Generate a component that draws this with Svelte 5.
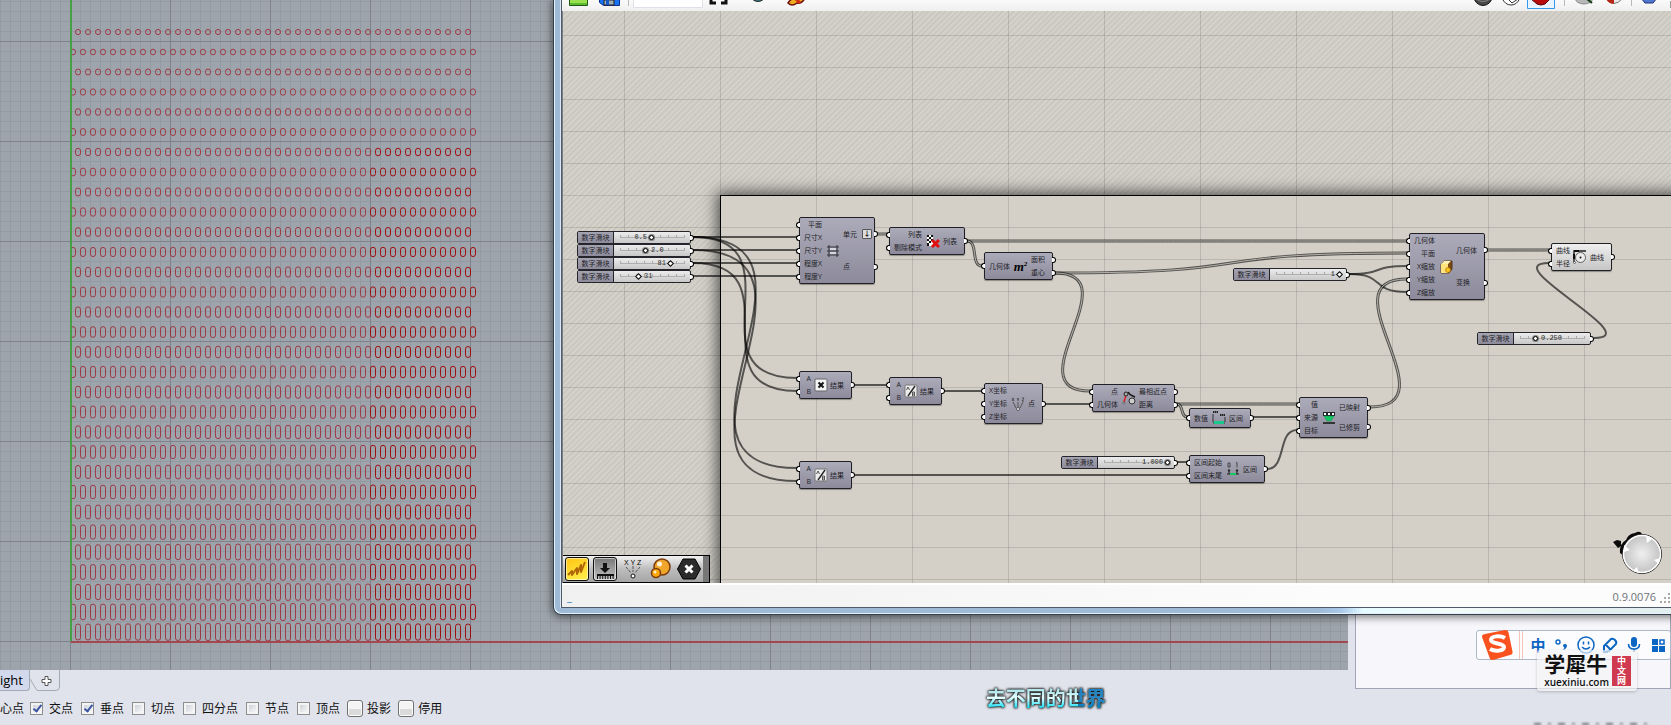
<script>
	// Canvas pan: node coordinates are stored in document space.
	const pan = { x: -563, y: -11 };

	let sliders = [
		{ id: 's1', x: 577, y: 231, value: 50, text: '0.5', side: 'left', knob: 'round' },
		{ id: 's2', x: 577, y: 244, value: 40, text: '2.0', side: 'right', knob: 'round' },
		{ id: 's3', x: 577, y: 257, value: 80, text: '81', side: 'left', knob: 'diamond' },
		{ id: 's4', x: 577, y: 270, value: 30, text: '31', side: 'right', knob: 'diamond' },
		{ id: 's5', x: 1477, y: 332, value: 25, text: '0.250', side: 'right', knob: 'round' },
		{ id: 's6', x: 1233, y: 268, value: 100, text: '1', side: 'left', knob: 'diamond' },
		{ id: 's7', x: 1061, y: 456, value: 100, text: '1.000', side: 'left', knob: 'round' }
	];

	const nodes = [
		{ id: 'hex', x: 799, y: 217, w: 76, icon: 'hex', ins: ['平面', '尺寸X', '尺寸Y', '程度X', '程度Y'], outs: ['单元', '点'], graft: 0 },
		{ id: 'cull', x: 889, y: 227, w: 76, icon: 'cull', ins: ['列表', '剔除模式'], outs: ['列表'] },
		{ id: 'area', x: 984, y: 252, w: 69, icon: 'area', ins: ['几何体'], outs: ['面积', '重心'] },
		{ id: 'mul', x: 799, y: 371, w: 53, icon: 'mul', ins: ['A', 'B'], outs: ['结果'] },
		{ id: 'div1', x: 889, y: 377, w: 53, icon: 'div', ins: ['A', 'B'], outs: ['结果'] },
		{ id: 'pt', x: 984, y: 383, w: 59, icon: 'xyz', ins: ['X坐标', 'Y坐标', 'Z坐标'], outs: ['点'] },
		{ id: 'div2', x: 799, y: 461, w: 53, icon: 'div', ins: ['A', 'B'], outs: ['结果'] },
		{ id: 'pull', x: 1092, y: 384, w: 83, icon: 'pull', ins: ['点', '几何体'], outs: ['最相近点', '距离'] },
		{ id: 'bnd', x: 1189, y: 408, w: 62, icon: 'bounds', ins: ['数值'], outs: ['区间'], slim: true },
		{ id: 'remap', x: 1299, y: 397, w: 69, icon: 'remap', ins: ['值', '来源', '目标'], outs: ['已映射', '已修剪'] },
		{ id: 'dom', x: 1189, y: 455, w: 76, icon: 'domain', ins: ['区间起始', '区间末尾'], outs: ['区间'] },
		{ id: 'scale', x: 1409, y: 233, w: 76, icon: 'scale', ins: ['几何体', '平面', 'X缩放', 'Y缩放', 'Z缩放'], outs: ['几何体', '变换'] },
		{ id: 'fillet', x: 1551, y: 243, w: 61, icon: 'fillet', ins: ['曲线', '半径'], outs: ['曲线'], light: true }
	];

	// x1, y1, x2, y2, double (list data)
	const wires = [
		[693, 237, 797, 237],
		[693, 250, 797, 250],
		[693, 263, 797, 263],
		[693, 276, 797, 276],
		[693, 237, 797, 378],
		[693, 263, 797, 391],
		[693, 237, 797, 468],
		[693, 250, 797, 481],
		[877, 234, 887, 234, true],
		[967, 241, 1407, 241, true],
		[967, 241, 982, 266, true],
		[1055, 273, 1407, 253, true],
		[1055, 273, 1090, 391, true],
		[1349, 274, 1407, 266],
		[1349, 274, 1407, 292],
		[1370, 407, 1407, 279, true],
		[854, 385, 887, 385],
		[944, 391, 982, 391],
		[1045, 404, 1090, 404],
		[1177, 404, 1297, 404, true],
		[1177, 404, 1187, 417, true],
		[1253, 417, 1297, 417],
		[1267, 469, 1297, 430],
		[1177, 462, 1187, 462],
		[854, 475, 1187, 475],
		[1487, 250, 1549, 250, true],
		[1594, 338, 1549, 263]
	];

	function wirePath([x1, y1, x2, y2]) {
		const dist = Math.hypot(x2 - x1, y2 - y1);
		const d = dist * (dist < 50 ? 0.4 : 0.63);
		return `M${x1} ${y1}C${x1 + d} ${y1} ${x2 - d} ${y2} ${x2} ${y2}`;
	}

	// 31 staggered rows of stretched cells, longer towards the bottom centre.
	const cells = [];
	for (let row = 0; row < 31; row++) {
		const odd = row % 2;
		const count = odd ? 41 : 40;
		for (let col = 0; col < count; col++) {
			const cx = (odd ? 73 : 78) + col * 10;
			const cy = 32 + row * 20;
			const bulge = Math.max(0, 1 - Math.abs(cx - 270) / 190) * (row / 30);
			cells.push({ cx, cy, ry: 2.6 + row * 0.18 + bulge, dark: cx > 370 && row > 5 });
		}
	}

	const knobAt = (v) => Math.round(6 + v * 0.64);

	const snaps = [
		{ label: '交点', on: true },
		{ label: '垂点', on: true },
		{ label: '切点', on: false },
		{ label: '四分点', on: false },
		{ label: '节点', on: false },
		{ label: '顶点', on: false }
	];
	const modes = ['投影', '停用'];
</script>

{#snippet glyph(name)}
	<svg class="glyph" viewBox="0 0 14 14" aria-hidden="true">
		{#if name === 'hex'}
			<path d="M3 1v12M11 1v12M1 3h12M1 7h12M1 11h12" stroke="#33333b" stroke-width="1" />
			<path d="M4 4h6v2H4zM4 8h6v2H4z" fill="#d5d5dc" />
		{:else if name === 'cull'}
			<path d="M1 1h6v11H1z" fill="#fff" />
			<path d="M1 1h2v2H1zM5 1h2v2H5zM3 3h2v2H3zM1 5h2v2H1zM5 5h2v2H5zM3 7h2v2H3zM1 9h2v3H1z" fill="#111" />
			<path d="M6 6l7 7M13 6l-7 7" stroke="#e01010" stroke-width="3" />
		{:else if name === 'mul'}
			<rect x="1" y="1" width="12" height="12" rx="1" fill="#f4f4f4" stroke="#666" />
			<path d="M4.500 4.500l5 5M9.500 4.500l-5 5" stroke="#111" stroke-width="2" />
		{:else if name === 'div'}
			<rect x="1" y="1" width="12" height="12" rx="1" fill="#ececec" stroke="#777" />
			<path d="M11 2L4 12" stroke="#222" stroke-width="1.400" />
			<path d="M2.500 6l1.500-3 1.500 3M8.500 8v4h2v-4zM8.500 10h2" fill="none" stroke="#555" stroke-width="1" />
		{:else if name === 'xyz'}
			<path d="M1 1l2 3M3 1L1 4M6 1l1 1.500L8 1M7 2v2M11 1h2l-2 3h2" fill="none" stroke="#333" stroke-width=".7" />
			<path d="M2 5l3 6M7 5v5M12 5l-3 6" stroke="#555" stroke-width="1" />
			<circle cx="7" cy="12" r="1.500" fill="#eee" stroke="#333" stroke-width=".7" />
		{:else if name === 'pull'}
			<path d="M6 1c2 4 4 4 7 5" fill="none" stroke="#111" stroke-width="1.600" />
			<path d="M2 11L4 4" stroke="#d22" stroke-width="1.500" />
			<circle cx="4" cy="3" r="2" fill="#aaa" stroke="#222" />
			<circle cx="10" cy="10" r="3" fill="#ccc" stroke="#333" />
			<circle cx="2" cy="12" r="1" fill="#fff" stroke="#222" stroke-width=".6" />
		{:else if name === 'bounds'}
			<path d="M1 3v8M13 6v5" stroke="#333" />
			<path d="M1 1h5M8 4h5" stroke="#222" stroke-width="2" stroke-dasharray="1.500 .5" />
			<path d="M1 12h12" stroke="#333" stroke-width="1" />
			<path d="M2 10h10v3H2z" fill="#19c98c" />
		{:else if name === 'remap'}
			<path d="M1 1h12v4H1z" fill="#222" />
			<path d="M2 2h2v2H2zM6 2h2v2H6zM10 2h2v2h-2z" fill="#fff" />
			<path d="M2 5h10l-3 5H5z" fill="#12c862" stroke="#185" stroke-width=".5" />
			<path d="M1 12h12" stroke="#333" stroke-width="2" />
		{:else if name === 'domain'}
			<path d="M3 7v5M11 7v5M1 12h12" stroke="#222" />
			<path d="M2 1h2v4H2zM10 1l1-.5v5" fill="none" stroke="#333" stroke-width=".8" />
			<path d="M1.500 8h3L3 10zM9.500 8h3L11 10z" fill="#222" />
			<path d="M4 11h6v2H4z" fill="#12c862" />
		{:else if name === 'scale'}
			<path d="M2 4l3-3h8v8l-3 4H2z" fill="#7b4a16" stroke="#40250a" stroke-width=".8" />
			<path d="M2 4h7v9H2z" fill="#ffe27a" />
			<path d="M5 1h7L9 4H2z" fill="#fff0b0" />
			<circle cx="9" cy="10" r="2.500" fill="#fdc21c" stroke="#a36a08" stroke-width=".6" />
		{:else if name === 'fillet'}
			<path d="M1 12V1h12" fill="none" stroke="#222" stroke-width="1.400" />
			<path d="M1 9V1h8" fill="none" stroke="#111" stroke-width="2" stroke-dasharray="5 3" />
			<circle cx="7.500" cy="7.500" r="5" fill="#ececec" stroke="#444" stroke-width=".8" />
			<circle cx="7.500" cy="7.500" r="1" fill="#111" />
			<circle cx="1.500" cy="12.500" r="1" fill="#fff" stroke="#222" stroke-width=".6" />
		{/if}
	</svg>
{/snippet}

<div class="desktop">
	<div class="workspace">
		<div class="main">
			<div class="viewport">
				<svg class="scene" height="670" aria-hidden="true">
					<defs>
						<pattern id="minor" x="0" y="1" width="10" height="10" patternUnits="userSpaceOnUse">
							<path d="M0 .5H10M.5 0V10" stroke="#939aa2" />
						</pattern>
						<pattern id="major" x="70" y="41" width="100" height="100" patternUnits="userSpaceOnUse">
							<path d="M0 .5H100M.5 0V100" stroke="#7f828b" />
						</pattern>
					</defs>
					<rect width="100%" height="670" fill="url(#minor)" />
					<rect width="100%" height="670" fill="url(#major)" />
					{#each cells as c}
						<rect
							class="cell"
							class:dark={c.dark}
							x={c.cx - 2.5}
							y={c.cy - c.ry}
							width="5"
							height={c.ry * 2}
							rx="2.5"
						/>
					{/each}
					<rect x="70" y="0" width="2" height="641" fill="#46a046" />
					<rect x="71" y="641" width="100%" height="2" fill="#a2484e" />
				</svg>
			</div>
			<nav class="tabs">
				<button class="tab active">ight</button>
				<button class="tab add" aria-label="+">
					<svg width="30" height="22" viewBox="0 0 30 22">
						<path d="M0 9l7 11.500h19q3.500 0 3.500-3.500V0" fill="none" stroke="#a3a9b5" />
						<path d="M15 6.500h3v3h3v3h-3v3h-3v-3h-3v-3h3z" fill="#fff" stroke="#555" />
					</svg>
				</button>
			</nav>
		</div>
		<aside class="side"></aside>
	</div>

	<form class="snaps">
		<span class="cut">心点</span>
		{#each snaps as s}
			<label><input type="checkbox" checked={s.on} />{s.label}</label>
		{/each}
		{#each modes as m}
			<label class="mode"><input type="checkbox" />{m}</label>
		{/each}
	</form>

	<section class="window">
		<div class="inner">
			<div class="toolbar">
				<svg width="250" height="11" viewBox="0 0 250 11" aria-hidden="true">
					<path d="M7.500-4h18v9.500h-18z" fill="#98e04f" stroke="#1e5a16" />
					<path d="M8 3h17v2H8z" fill="#5cbb2e" />
					<path d="M37.500-3h20V5.500h-16l-4-3z" fill="#1672f2" stroke="#0a2e92" />
					<path d="M42 0h10v5H42z" fill="#9daab8" stroke="#222" />
					<path d="M44 0h3v5h-3z" fill="#1458c8" />
					<path d="M66.500 0v6" stroke="#b8b8b8" />
					<path d="M71.500-2h69v9.500h-69z" fill="#fff" stroke="#dfe1e8" />
					<path d="M149 0v3h5M159 3h5V0" fill="none" stroke="#111" stroke-width="3" />
					<path d="M190-1q6 5 12 0z" fill="#3e8292" stroke="#222" />
					<path d="M226 3q3-5 8-5h9q-3 6-8 5-5 4-9 0z" fill="#efac20" stroke="#70150c" stroke-width="1.500" />
					<path d="M234-1l4 4" stroke="#d22c15" stroke-width="3" />
				</svg>
				<svg width="200" height="11" viewBox="0 0 200 11" aria-hidden="true">
					<circle cx="12" cy="-3.500" r="9" fill="#474747" stroke="#111" />
					<path d="M5-1q7 5 14 0" stroke="#888" fill="none" />
					<path d="M31-2q3 7 9 7t9-7M37-1l4 4 6-4" fill="#fff" stroke="#333" />
					<path d="M56.500-2v10.500h27V-2" fill="#eaf4fe" stroke="#3399ee" />
					<path d="M60-1l6 5q4 2 8 0l5-5z" fill="#b80c0c" stroke="#5c0505" />
					<path d="M93.500 0v6M160.500 0v6" stroke="#b8b8b8" />
					<ellipse cx="113" cy="-2" rx="9" ry="6" fill="#b8b8b8" stroke="#888" />
					<path d="M116-1l5 4" stroke="#143c14" stroke-width="2" />
					<path d="M135-1q8 9 16 0z" fill="#e8e8e8" stroke="#777" />
					<path d="M135-1q4 6 8 4.500V-1z" fill="#b82517" />
					<path d="M170-2l4 5h8l4-5z" fill="#4f78d0" stroke="#1c2e70" />
					<path d="M199.500 1v7" stroke="#999" />
				</svg>
			</div>

			<div class="canvas">
				<div class="sheet"></div>
				<div class="grid"></div>
				<div class="stage" style="transform: translate({pan.x}px, {pan.y}px)">
					<svg class="wires" width="1" height="1" aria-hidden="true">
						{#each wires as w}
							<path class="wire" class:double={w[4]} d={wirePath(w)} />
							{#if w[4]}
								<path class="wire core" d={wirePath(w)} />
							{/if}
						{/each}
					</svg>

					{#each sliders as s (s.id)}
						<div class="slider" style="left: {s.x}px; top: {s.y}px">
							<label for={s.id}>数字滑块</label>
							<div class="track">
								<input id={s.id} class={s.knob} type="range" min="0" max="100" value={s.value} />
								<span
									class="value"
									style={s.side === 'left'
										? `right: ${81 - knobAt(s.value)}px`
										: `left: ${5 + knobAt(s.value)}px`}>{s.text}</span
								>
							</div>
							<i class="grip out"></i>
						</div>
					{/each}

					{#each nodes as n (n.id)}
						<div
							class="node"
							class:light={n.light}
							class:slim={n.slim}
							style="left: {n.x}px; top: {n.y}px; width: {n.w}px"
						>
							<div class="ports ins">
								{#each n.ins as port}
									<div class="port"><i class="grip in"></i>{port}</div>
								{/each}
							</div>
							{#if n.icon === 'area'}
								<span class="area">m<sup>2</sup></span>
							{:else}
								{@render glyph(n.icon)}
							{/if}
							<div class="ports outs" class:wide={n.graft === 0}>
								{#each n.outs as port, i}
									<div class="port">
										{port}
										{#if n.graft === i}<b class="graft">↓</b>{/if}
										<i class="grip out"></i>
									</div>
								{/each}
							</div>
						</div>
					{/each}
				</div>

				<div class="recent">
					<button class="tile gold" aria-label="Sketch">
						<svg width="22" height="22" viewBox="0 0 22 22">
							<path
								d="M2 17l4-4v4l5-7v6l4-9v7l4-10"
								fill="none"
								stroke="#b06608"
								stroke-width="2"
								stroke-linejoin="round"
							/>
						</svg>
					</button>
					<button class="tile steel" aria-label="Import">
						<svg width="22" height="22" viewBox="0 0 22 22">
							<path d="M9 5h4v5h3l-5 5-5-5h3z" fill="#111" />
							<path d="M3 17h17" stroke="#111" stroke-width="2" />
							<path d="M3 19.500h17" stroke="#111" stroke-width="3" stroke-dasharray="1 1.600" />
						</svg>
					</button>
					<button class="tile" aria-label="XYZ">
						<svg width="24" height="24" viewBox="0 0 24 24">
							<text x="3" y="8" class="axis">X Y Z</text>
							<path d="M5 10l5 6M12 9v6M19 10l-5 6" stroke="#555" stroke-dasharray="3 1" />
							<circle cx="12" cy="19" r="2" fill="#fff" stroke="#111" />
						</svg>
					</button>
					<button class="tile" aria-label="Spheres">
						<svg width="24" height="24" viewBox="0 0 24 24">
							<circle cx="13" cy="10" r="8" fill="#f0a62a" stroke="#7b3b0c" stroke-width="1.500" />
							<circle cx="10.500" cy="7" r="2.500" fill="#fff2d8" />
							<circle cx="7" cy="16" r="4.500" fill="#fda90b" stroke="#7b3b0c" stroke-width="1.500" />
							<circle cx="6" cy="15" r="1.500" fill="#fff2c8" />
						</svg>
					</button>
					<button class="tile" aria-label="Cancel">
						<svg width="24" height="24" viewBox="0 0 24 24">
							<path d="M6 2h12l5.500 10L18 22H6L.5 12z" fill="#2b2b2b" stroke="#000" />
							<path d="M8.500 8.500l7 7M15.500 8.500l-7 7" stroke="#fff" stroke-width="3" />
						</svg>
					</button>
				</div>

				<svg class="compass" width="52" height="46" viewBox="0 0 52 46" aria-hidden="true">
					<defs>
						<radialGradient id="ball">
							<stop offset="0" stop-color="#f0f0f0" />
							<stop offset="1" stop-color="#c2c2c2" />
						</radialGradient>
					</defs>
					<path d="M1 12l4-2 4 1v5l-3 2zM8 23q-1-9 6-13 2-6 9-7 5-3 7 1L12 26z" fill="#0a0a0a" />
					<circle cx="30" cy="24" r="19.500" fill="url(#ball)" stroke="#222" />
					<circle cx="30" cy="24" r="18.500" fill="none" stroke="#fff" stroke-width="1.500" />
					<path d="M34 6l6 3-5 4zM12 15l6 5-6 2zM48 28l-6 2 5 4zM21 41l4-4 2 6z" fill="#fff" />
				</svg>
			</div>

			<footer class="status">
				<span class="cursor">_</span>
				<span class="version">0.9.0076</span>
				<svg width="11" height="11" viewBox="0 0 11 11" aria-hidden="true">
					<path d="M8 0h2v2H8zM4 4h2v2H4zM8 4h2v2H8zM0 8h2v2H0zM4 8h2v2H4zM8 8h2v2H8z" fill="#a9a9a9" />
				</svg>
			</footer>
		</div>
	</section>

	<div class="ime">
		<svg width="32" height="32" viewBox="0 0 32 32" aria-hidden="true">
			<path d="M4 5l20-4q3-.5 3.500 2.500l4 19q.5 3-2.500 3.500L12 31q-3 .5-3.500-2.500L1 8q-.5-2.500 3-3z" fill="#f9521e" />
			<path d="M24 9c-5-3-14-2-14 2s13 3 13 7-9 5-14 2" fill="none" stroke="#fff" stroke-width="4" />
		</svg>
		<i class="rule"></i>
		<button class="zh">中</button>
		<button aria-label="标点">
			<svg width="18" height="18" viewBox="0 0 18 18">
				<circle cx="5" cy="6" r="2" fill="none" stroke="#0a66c2" stroke-width="1.400" />
				<path d="M10 9q2-2 4 0 0 4-4 5 2-2 1-3-1 0-1-2z" fill="#0a66c2" />
			</svg>
		</button>
		<button aria-label="表情">
			<svg width="18" height="18" viewBox="0 0 18 18" fill="none" stroke="#0a66c2" stroke-width="1.500">
				<circle cx="9" cy="9" r="8" />
				<path d="M6.500 5.500v3M11.500 5.500v3M5 11q4 4 8 0" />
			</svg>
		</button>
		<button aria-label="手写">
			<svg width="18" height="18" viewBox="0 0 18 18" fill="none" stroke="#0a66c2" stroke-width="2">
				<path d="M3 10l7-7q2-1 4 1t1 4l-7 7-5 1zM5 9l4 4M2 16h5" />
			</svg>
		</button>
		<button aria-label="语音">
			<svg width="18" height="18" viewBox="0 0 18 18">
				<rect x="6" y="1" width="6" height="10" rx="3" fill="#0a66c2" />
				<path d="M3.500 8q0 5 5.500 5t5.500-5M9 13v3" fill="none" stroke="#0a66c2" stroke-width="1.600" />
			</svg>
		</button>
		<button aria-label="工具箱">
			<svg width="18" height="18" viewBox="0 0 18 18">
				<path d="M3 3h6v6H3zM3 10h6v6H3zM10 10h6v6h-6z" fill="#0a66c2" />
				<path d="M11 4h4v4h-4z" fill="none" stroke="#0a66c2" stroke-width="1.500" />
			</svg>
		</button>
	</div>

	<div class="brand">
		<div class="words">
			<strong>学犀牛</strong>
			<span>xuexiniu.com</span>
		</div>
		<div class="seal"><span>中</span><span>文</span><span>网</span></div>
	</div>

	<p class="subtitle">去不同的世界</p>
	<div class="smudge"></div>
</div>

<style>
	:global(body) {
		background: #e0e3eb;
	}

	button {
		border: 0;
		padding: 0;
		background: none;
		font: inherit;
	}

	.desktop {
		position: relative;
		display: flex;
		flex-direction: column;
		height: 100vh;
		overflow: hidden;
		background: #e0e3eb;
		color: #111;
		font-family: 'Open Sans', 'Noto Sans CJK SC', sans-serif;
		font-size: 12px;
	}

	.workspace {
		flex: 1;
		display: flex;
		min-height: 0;
	}

	.main {
		flex: 1;
		display: flex;
		flex-direction: column;
		min-width: 0;
	}

	.viewport {
		position: relative;
		flex: 1;
		overflow: hidden;
		background: #9da4ac;
	}

	.scene {
		position: absolute;
		left: 0;
		bottom: 0;
		width: 100%;
	}

	.cell {
		fill: none;
		stroke: #a01824;
		stroke-opacity: 0.75;
		stroke-width: 1;
	}

	.cell.dark {
		stroke: #a00000;
		stroke-opacity: 0.9;
	}

	.side {
		width: 314px;
		margin: 0 0 2px 7px;
		border: 1px solid #a0a4b6;
		background: #f7f7fb;
	}

	/* Viewport tabs */
	.tabs {
		display: flex;
		height: 21px;
	}

	.tab.active {
		width: 30px;
		border: 1px solid #a3a9b5;
		border-width: 0 1px 1px 0;
		border-radius: 0 0 4px 0;
		background: #d2d9ec;
		font-size: 13px;
		line-height: 20px;
		text-align: left;
	}

	.tab.add svg {
		display: block;
	}

	/* Object snaps */
	.snaps {
		display: flex;
		align-items: center;
		gap: 8px;
		height: 34px;
	}

	.cut {
		margin-right: -2px;
	}

	.snaps label {
		display: flex;
		align-items: center;
		gap: 6px;
		white-space: nowrap;
	}

	.snaps input {
		appearance: none;
		width: 13px;
		height: 13px;
		margin: 0;
		border: 1px solid #8d8d8d;
		background: linear-gradient(135deg, #c4c9d0, #fff);
		box-shadow: inset 0 0 0 2px #f4f4f4;
	}

	.snaps input:checked::after {
		content: '';
		display: block;
		width: 3px;
		height: 7px;
		margin: 0 0 0 4px;
		border: solid #3b55a0;
		border-width: 0 2px 2px 0;
		transform: rotate(38deg);
	}

	.snaps .mode {
		gap: 4px;
		margin-left: -1px;
	}

	.snaps .mode input {
		width: 16px;
		height: 17px;
		border-color: #707070;
		border-radius: 3px;
		background: linear-gradient(#f4f4f4 50%, #dadada 50%);
		box-shadow: inset 0 0 0 1px #fcfcfc;
	}

	/* Node editor window */
	.window {
		position: absolute;
		top: 0;
		right: -8px;
		bottom: 110px;
		left: 553px;
		display: flex;
		padding: 0 0 6px 7px;
		border: 1px solid #35404c;
		border-top: 0;
		border-radius: 0 0 0 8px;
		background: linear-gradient(90deg, #9ebad7 68%, #a9c8ea 70%, #e4fbff 72%, #f4fcfb 80%, #e3efee 90%);
		box-shadow:
			inset 1px -1px 0 #e4f0fa,
			0 1px 8px 1px #0008;
	}

	.inner {
		flex: 1;
		display: flex;
		flex-direction: column;
		min-width: 0;
		margin-right: 7px;
		border: 1px solid #4f5b68;
		border-width: 0 0 1px 1px;
		box-shadow: -1px 0 0 #dbe8f4;
	}

	.toolbar {
		display: flex;
		justify-content: space-between;
		height: 11px;
		overflow: hidden;
		background: linear-gradient(#fafafa, #efefef);
	}

	.canvas {
		position: relative;
		flex: 1;
		overflow: hidden;
		border-left: 1px solid #7c8084;
		background: repeating-linear-gradient(135deg, #d4d1c9 0 2px, #cac8c0 2px 4px);
	}

	.sheet {
		position: absolute;
		top: 184px;
		right: -20px;
		bottom: -20px;
		left: 157px;
		border: 1px solid #000;
		background: #d4d0c8;
		box-shadow: 0 0 14px 3px #0009;
	}

	.grid {
		position: absolute;
		inset: 0;
		background:
			linear-gradient(90deg, #0000001f 1px, transparent 1px) 61px 0 / 96px 32px,
			linear-gradient(#0000001f 1px, transparent 1px) 0 24px / 96px 32px;
	}

	.stage {
		position: absolute;
		top: 0;
		left: 0;
		color: #1e1e26;
		font-size: 7px;
		line-height: 13px;
	}

	.wires {
		position: absolute;
		overflow: visible;
	}

	.wire {
		fill: none;
		stroke: #000;
		stroke-opacity: 0.6;
		stroke-width: 2;
	}

	.wire.double {
		stroke-width: 3;
	}

	.wire.core {
		stroke: #b5b3aa;
		stroke-opacity: 1;
		stroke-width: 1;
	}

	.grip {
		position: absolute;
		top: calc(50% - 3px);
		width: 3px;
		height: 4px;
		border: 1px solid #000;
		background: #fff;
	}

	.grip.in {
		left: -8px;
		border-right: 0;
		border-radius: 3px 0 0 3px;
	}

	.grip.out {
		right: -4px;
		border-left: 0;
		border-radius: 0 3px 3px 0;
	}

	.slider {
		position: absolute;
		display: flex;
		width: 112px;
		height: 11px;
		border: 1px solid #24242a;
		border-radius: 2px;
		background: linear-gradient(#ececec, #c8c8c8);
		line-height: 11px;
	}

	.slider label {
		width: 35px;
		border-right: 1px solid #24242a;
		background: linear-gradient(#a5a4b2, #8d8b9b);
		text-align: center;
	}

	.track {
		position: relative;
		flex: 1;
		background: linear-gradient(#b0b0b0, #b0b0b0) 6px 5px / 64px 1px no-repeat;
	}

	.track::before {
		content: '';
		position: absolute;
		top: 3px;
		left: 6px;
		width: 65px;
		height: 3px;
		background: repeating-linear-gradient(90deg, #aaa 0 1px, transparent 1px 8px);
	}

	.track input {
		position: absolute;
		top: 0;
		left: 3px;
		appearance: none;
		width: 69px;
		height: 11px;
		margin: 0;
		background: none;
	}

	.track input::-webkit-slider-thumb {
		appearance: none;
		box-sizing: border-box;
		width: 5px;
		height: 5px;
		border: 1px solid #000;
		border-radius: 50%;
		background: #fff;
		box-shadow: 0 0 0 1px #0006;
	}

	.track input.diamond::-webkit-slider-thumb {
		border-radius: 0;
		box-shadow: none;
		transform: rotate(45deg);
	}

	.value {
		position: absolute;
		top: 0;
		color: #333;
		font-family: 'Liberation Mono', monospace;
	}

	.node {
		position: absolute;
		box-sizing: border-box;
		display: flex;
		align-items: stretch;
		justify-content: space-between;
		padding: 0 7px 0 4px;
		border: 1px solid #202026;
		border-radius: 2px;
		background: linear-gradient(#acabba, #8d8b9b);
		box-shadow: 0 1px 1px #0005;
		white-space: nowrap;
	}

	.node:has(.ports.wide) {
		padding-right: 2px;
	}

	.node.light {
		background: linear-gradient(#efefef, #c6c6c6);
	}

	.node.slim {
		padding-top: 2px;
		padding-bottom: 2px;
	}

	.ports {
		display: flex;
		flex-direction: column;
		min-width: 7px;
	}

	.ports.ins {
		text-align: right;
	}

	.port {
		position: relative;
		flex: 1;
		display: flex;
		align-items: center;
		min-height: 13px;
	}

	.ins .port {
		justify-content: flex-end;
	}

	.outs .grip {
		right: -11px;
	}

	.outs.wide .grip {
		right: -6px;
	}

	.outs.wide {
		width: 29px;
	}

	.graft {
		margin-left: auto;
		width: 8px;
		height: 8px;
		border: 1px solid #555;
		border-radius: 1px;
		background: #ddd;
		line-height: 7px;
		text-align: center;
	}

	.glyph {
		flex: none;
		align-self: center;
		width: 14px;
		height: 14px;
	}

	.area {
		align-self: center;
		color: #000;
		font: italic 700 13px/13px 'Liberation Serif', serif;
	}

	.area sup {
		font-size: 7px;
		line-height: 1px;
	}

	/* Recently used components */
	.recent {
		position: absolute;
		bottom: 0;
		left: 0;
		display: flex;
		align-items: center;
		gap: 4px;
		padding: 0 8px 0 2px;
		height: 26px;
		border: 1px solid #000;
		border-width: 1px 1px 1px 0;
		background:
			linear-gradient(#777, #777) right / 6px 100% no-repeat,
			linear-gradient(#f2f2f2, #bdbdbd 50%, #a6a6a6);
	}

	.tile {
		display: grid;
		place-items: center;
		box-sizing: border-box;
		width: 24px;
		height: 24px;
	}

	.gold,
	.steel {
		border: 1px solid #111;
		border-radius: 3px;
		background: linear-gradient(160deg, #ffc414, #fff04c);
		box-shadow: inset 0 0 0 1px #fff8;
	}

	.steel {
		background: linear-gradient(#777, #c4c4c4);
	}

	.axis {
		font: 400 7px 'Liberation Sans', sans-serif;
	}

	.compass {
		position: absolute;
		right: 7px;
		bottom: 7px;
	}

	.status {
		display: flex;
		align-items: center;
		gap: 4px;
		box-sizing: border-box;
		height: 24px;
		padding-left: 5px;
		border-top: 2px solid #fff;
		background: linear-gradient(90deg, #f0f0f0, #fcfcfc 70%);
		color: #6f7277;
		font-size: 11px;
	}

	.cursor {
		color: #2878a8;
	}

	.version {
		margin-left: auto;
	}

	.status svg {
		align-self: flex-end;
		margin-bottom: 3px;
	}

	/* Input method bar */
	.ime {
		position: absolute;
		right: 0;
		bottom: 65px;
		display: flex;
		align-items: center;
		gap: 6px;
		box-sizing: border-box;
		height: 30px;
		padding: 0 3px 0 4px;
		border: 1px solid #abb9c8;
		border-radius: 3px;
		background: #fcfcfe;
	}

	.ime svg {
		display: block;
	}

	.rule {
		width: 2px;
		height: 28px;
		border: 1px solid #f6c4b4;
		border-width: 0 1px;
	}

	.zh {
		width: 18px;
		color: #0a66c2;
		font-size: 15px;
		font-weight: 700;
		line-height: 18px;
	}

	.brand {
		position: absolute;
		right: 34px;
		bottom: 34px;
		display: flex;
		align-items: center;
		gap: 3px;
		height: 41px;
		padding: 0 6px 0 7px;
		border-radius: 3px;
		background: #f4f4f6b0;
		box-shadow: 0 1px 3px #0003;
	}

	.words {
		display: flex;
		flex-direction: column;
		font-weight: 600;
	}

	.words strong {
		font: 700 21px/23px 'Noto Sans CJK SC', sans-serif;
	}

	.words span {
		font-size: 10px;
		line-height: 14px;
	}

	.seal {
		display: flex;
		flex-direction: column;
		width: 19px;
		background: #cf3a50;
		color: #fff;
		font-size: 9px;
		font-weight: 700;
		line-height: 10px;
		text-align: center;
	}

	.subtitle {
		position: absolute;
		bottom: 12px;
		left: 59%;
		margin: 0;
		background:
			linear-gradient(90deg, transparent 77%, #0069b4d0 77%),
			linear-gradient(#b4e8ec 25%, #e8ffff 45%, #00dcf8 85%);
		background-clip: text;
		color: transparent;
		filter: drop-shadow(0 0 1px #111) drop-shadow(0 0 1px #222);
		font-size: 20px;
		font-weight: 700;
		line-height: 28px;
	}

	.smudge {
		position: absolute;
		right: 17px;
		bottom: 0;
		width: 120px;
		height: 2px;
		background: repeating-linear-gradient(90deg, #6b6d74 0 7px, transparent 7px 14px, #85878e 14px 17px, transparent 17px 24px);
		filter: blur(1px);
	}
</style>
